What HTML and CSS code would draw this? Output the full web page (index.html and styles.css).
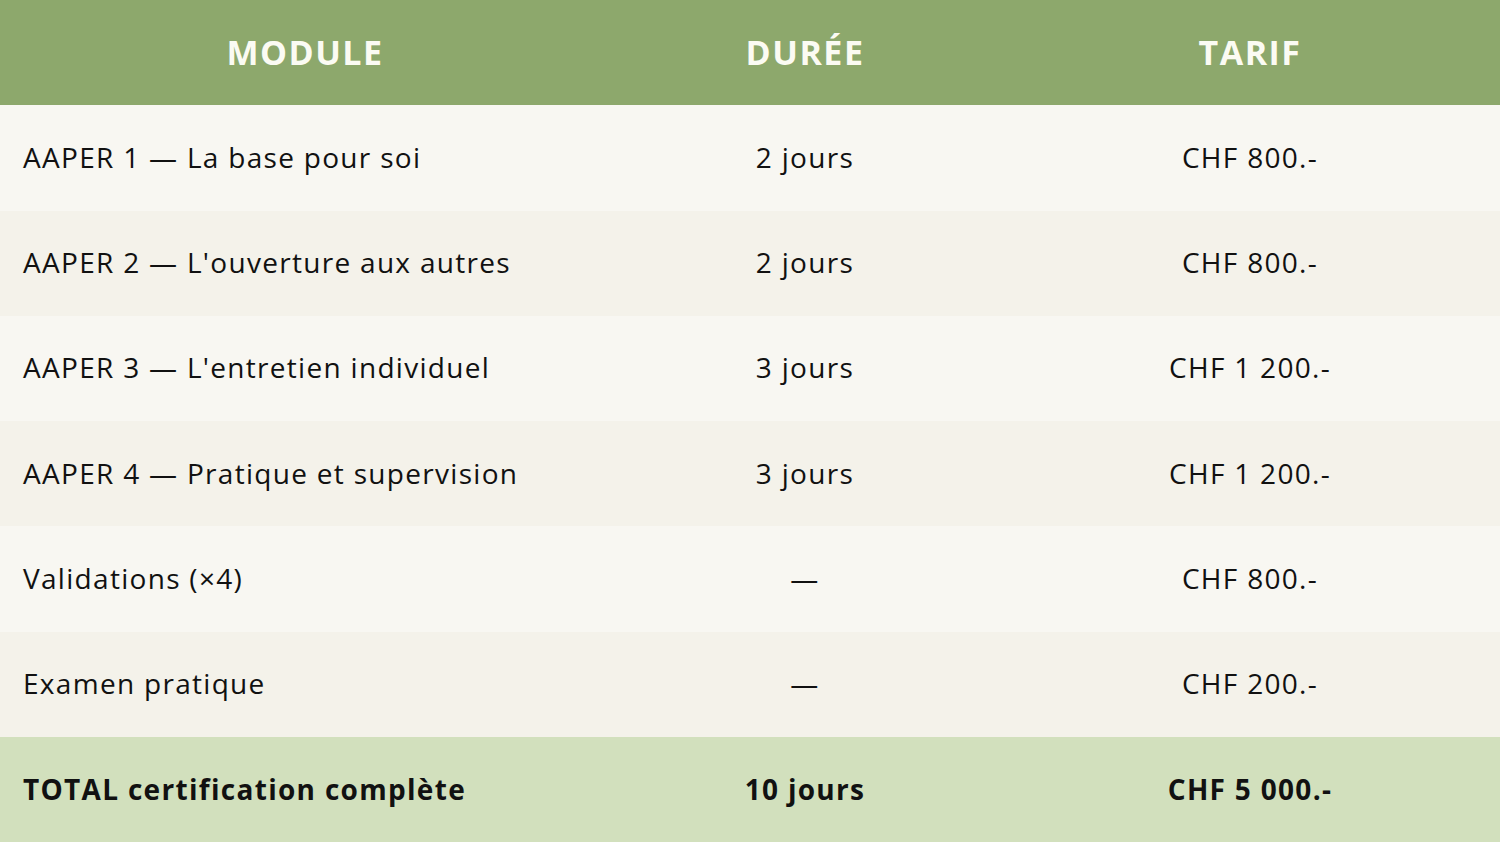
FILE: index.html
```html
<!DOCTYPE html>
<html lang="fr">
<head>
<meta charset="utf-8">
<title>Tarifs</title>
<link rel="stylesheet" href="styles.css">
</head>
<body>
<div class="table">
  <div class="row head">
    <div class="cell c1">MODULE</div>
    <div class="cell c2">DURÉE</div>
    <div class="cell c3">TARIF</div>
  </div>
  <div class="row odd">
    <div class="cell c1">AAPER 1 — La base pour soi</div>
    <div class="cell c2">2 jours</div>
    <div class="cell c3">CHF 800.-</div>
  </div>
  <div class="row even">
    <div class="cell c1">AAPER 2 — L'ouverture aux autres</div>
    <div class="cell c2">2 jours</div>
    <div class="cell c3">CHF 800.-</div>
  </div>
  <div class="row odd">
    <div class="cell c1">AAPER 3 — L'entretien individuel</div>
    <div class="cell c2">3 jours</div>
    <div class="cell c3">CHF 1 200.-</div>
  </div>
  <div class="row even">
    <div class="cell c1">AAPER 4 — Pratique et supervision</div>
    <div class="cell c2">3 jours</div>
    <div class="cell c3">CHF 1 200.-</div>
  </div>
  <div class="row odd">
    <div class="cell c1">Validations (×4)</div>
    <div class="cell c2">—</div>
    <div class="cell c3">CHF 800.-</div>
  </div>
  <div class="row even">
    <div class="cell c1">Examen pratique</div>
    <div class="cell c2">—</div>
    <div class="cell c3">CHF 200.-</div>
  </div>
  <div class="row total">
    <div class="cell c1">TOTAL certification complète</div>
    <div class="cell c2">10 jours</div>
    <div class="cell c3">CHF 5 000.-</div>
  </div>
</div>
</body>
</html>
```
FILE: styles.css
```css
html, body {
  margin: 0;
  padding: 0;
  background: #f8f7f2;
}
body {
  font-family: "Open Sans", "DejaVu Sans", sans-serif;
  color: #111;
}
.table {
  display: grid;
  grid-template-rows: repeat(8, 105.25px);
  width: 1500px;
  height: 842px;
}
.row {
  display: grid;
  grid-template-columns: 610px 390px 500px;
  align-items: center;
  padding-bottom: 2px;
}
.cell {
  font-size: 28px;
  line-height: 1;
  letter-spacing: 1.3px;
}
.c1 { padding-left: 23px; }
.c2, .c3 { text-align: center; }
.head {
  background: #8da86c;
  color: #fbfbf3;
  padding-bottom: 2px;
}
.head .cell {
  font-weight: 700;
  font-size: 34px;
  letter-spacing: 1.5px;
  text-align: center;
  padding-left: 0;
}
.odd { background: #f8f7f2; }
.even { background: #f4f2ea; }
.total {
  background: #d2e0bd;
  padding-bottom: 0;
}
.total .cell {
  font-weight: 700;
  letter-spacing: 1.3px;
}
```
